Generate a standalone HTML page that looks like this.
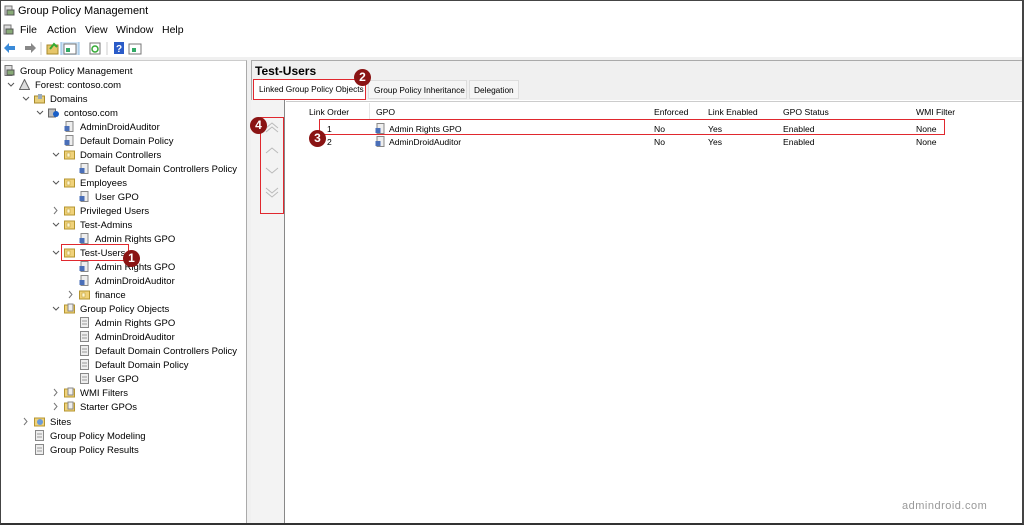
<!DOCTYPE html>
<html><head><style>
*{margin:0;padding:0;box-sizing:border-box}
body{width:1024px;height:525px;overflow:hidden;background:#fff;font-family:"Liberation Sans",sans-serif;font-size:11px;color:#000;position:relative}
.frame{position:absolute;left:0;top:0;width:1024px;height:525px;border:1px solid #444;border-bottom:2px solid #333;border-right:2px solid #444}
.a{position:absolute;white-space:nowrap}
.ic{position:absolute;width:11px;height:11px}
.red{position:absolute;border:1.5px solid #e0282e}
.badge{position:absolute;width:17px;height:17px;border-radius:50%;background:#8a1414;color:#fff;font-weight:bold;font-size:12px;text-align:center;line-height:17px}
.s{font-size:8.6px}
</style></head><body>
<svg class="ic" style="left:4px;top:5px" viewBox="0 0 11 11"><rect x="1" y="1" width="7" height="9" fill="#ddd" stroke="#777"/><rect x="3" y="5" width="7" height="5" fill="#8a7" stroke="#555"/></svg>
<div class="a" style="left:18px;top:5px;font-size:11px">Group Policy Management</div>
<svg class="ic" style="left:3px;top:24px" viewBox="0 0 11 11"><rect x="1" y="1" width="7" height="9" fill="#ddd" stroke="#777"/><rect x="3" y="5" width="7" height="5" fill="#8a7" stroke="#555"/></svg>
<div class="a" style="left:20px;top:24px;font-size:10.5px">File</div>
<div class="a" style="left:47px;top:24px;font-size:10.5px">Action</div>
<div class="a" style="left:85px;top:24px;font-size:10.5px">View</div>
<div class="a" style="left:116px;top:24px;font-size:10.5px">Window</div>
<div class="a" style="left:162px;top:24px;font-size:10.5px">Help</div>
<svg class="a" style="left:3px;top:42px" width="140" height="13" viewBox="0 0 140 13">
<path d="M1 6 L6 1 V4 H12 V8 H6 V11Z" fill="#3a8ad8"/>
<path d="M33 6 L28 1 V4 H22 V8 H28 V11Z" fill="#888"/>
<line x1="38" y1="0" x2="38" y2="13" stroke="#ccc"/>
<rect x="44" y="3" width="11" height="9" fill="#e6c66a" stroke="#a8892a"/><path d="M47 7 L51 2 L54 5" stroke="#3a3" fill="none" stroke-width="2"/>
<rect x="58" y="-2" width="18" height="16" fill="#cfe3f5" stroke="#8bb8e0"/><rect x="61" y="2" width="12" height="10" fill="#fff" stroke="#777"/><rect x="63" y="6" width="4" height="4" fill="#3a6"/>
<rect x="87" y="1" width="10" height="11" fill="#fff" stroke="#777"/><circle cx="92" cy="7" r="3" fill="none" stroke="#3a3" stroke-width="1.5"/>
<line x1="104" y1="0" x2="104" y2="13" stroke="#ccc"/>
<rect x="111" y="0" width="10" height="12" fill="#2a5bc8"/><text x="113" y="10" fill="#fff" font-size="10" font-weight="bold">?</text>
<rect x="126" y="2" width="12" height="10" fill="#fff" stroke="#777"/><rect x="129" y="6" width="4" height="4" fill="#3a6"/>
</svg>
<div class="a" style="left:0;top:57px;width:1024px;height:3px;background:#f0f0f0"></div>
<div class="a" style="left:0;top:60px;width:247px;height:465px;border-right:1px solid #aaa;border-top:1px solid #ccc"></div>
<div class="a" style="left:247px;top:60px;width:4px;height:465px;background:#f0f0f0"></div>
<div id="tree"></div>
<div class="a" style="left:251px;top:60px;width:772px;height:465px;background:#f0f0f0;border-top:1px solid #aaa;border-left:1px solid #aaa"></div>
<div class="a" style="left:255px;top:64px;font-weight:bold;font-size:12px">Test-Users</div>
<div class="a" style="left:253px;top:79px;width:113px;height:22px;background:#fff;border:1px solid #ccc;border-bottom:none"></div>
<div class="a" style="left:259px;top:84px;font-size:8.3px">Linked Group Policy Objects</div>
<div class="a" style="left:368px;top:80px;width:99px;height:19px;background:#f5f5f5;border:1px solid #ddd"></div>
<div class="a" style="left:374px;top:85px;font-size:8.3px">Group Policy Inheritance</div>
<div class="a" style="left:469px;top:80px;width:50px;height:19px;background:#f5f5f5;border:1px solid #ddd"></div>
<div class="a" style="left:474px;top:85px;font-size:8.3px">Delegation</div>
<div class="a" style="left:251px;top:100px;width:772px;height:425px;background:#fff"></div>
<div class="a" style="left:251px;top:100px;width:34px;height:425px;background:#f3f3f3;border-right:1px solid #888"></div>
<svg class="a" style="left:264px;top:120px" width="16" height="90" viewBox="0 0 16 90">
<g fill="none" stroke="#bbb"><path d="M2 8 L8 3 L14 8 M2 12 L8 7 L14 12"/><path d="M2 33 L8 28 L14 33"/><path d="M2 48 L8 53 L14 48"/><path d="M2 68 L8 73 L14 68 M2 72 L8 77 L14 72"/></g></svg>
<div class="a" style="left:286px;top:101px;width:737px;height:1px;background:#ccc"></div>
<div class="a s" style="left:309px;top:107px">Link Order</div>
<div class="a" style="left:369px;top:103px;width:1px;height:16px;background:#e5e5e5"></div>
<div class="a s" style="left:376px;top:107px">GPO</div>
<div class="a s" style="left:654px;top:107px">Enforced</div>
<div class="a s" style="left:708px;top:107px">Link Enabled</div>
<div class="a s" style="left:783px;top:107px">GPO Status</div>
<div class="a s" style="left:916px;top:107px">WMI Filter</div>
<div class="a s" style="left:327px;top:124px">1</div>
<div class="a s" style="left:327px;top:137px">2</div>
<svg class="ic" style="left:375px;top:123px" viewBox="0 0 11 11"><rect x="2" y="0.5" width="7" height="10" fill="#eee" stroke="#888"/><rect x="0.5" y="5" width="5" height="5" fill="#4a6fb8"/></svg>
<svg class="ic" style="left:375px;top:136px" viewBox="0 0 11 11"><rect x="2" y="0.5" width="7" height="10" fill="#eee" stroke="#888"/><rect x="0.5" y="5" width="5" height="5" fill="#4a6fb8"/></svg>
<div class="a s" style="left:389px;top:124px">Admin Rights GPO</div>
<div class="a s" style="left:389px;top:137px">AdminDroidAuditor</div>
<div class="a s" style="left:654px;top:124px">No</div><div class="a s" style="left:654px;top:137px">No</div>
<div class="a s" style="left:708px;top:124px">Yes</div><div class="a s" style="left:708px;top:137px">Yes</div>
<div class="a s" style="left:783px;top:124px">Enabled</div><div class="a s" style="left:783px;top:137px">Enabled</div>
<div class="a s" style="left:916px;top:124px">None</div><div class="a s" style="left:916px;top:137px">None</div>
<div class="red" style="left:253px;top:79px;width:113px;height:21px"></div>
<div class="red" style="left:319px;top:119px;width:626px;height:16px"></div>
<div class="red" style="left:260px;top:117px;width:24px;height:97px"></div>
<div class="red" style="left:61px;top:244px;width:68px;height:17px"></div>
<div class="badge" style="left:354px;top:69px">2</div>
<div class="badge" style="left:309px;top:130px">3</div>
<div class="badge" style="left:250px;top:117px">4</div>
<div class="badge" style="left:123px;top:250px">1</div>
<div class="a" style="left:902px;top:500px;font-size:11px;color:#999;letter-spacing:0.5px">admindroid.com</div>
<div class="frame"></div>
<script>
var rows=[
[0,'Group Policy Management','gpm',''],
[1,'Forest: contoso.com','forest','v'],
[2,'Domains','doms','v'],
[3,'contoso.com','dom','v'],
[4,'AdminDroidAuditor','gpo',''],
[4,'Default Domain Policy','gpo',''],
[4,'Domain Controllers','ou','v'],
[5,'Default Domain Controllers Policy','gpo',''],
[4,'Employees','ou','v'],
[5,'User GPO','gpo',''],
[4,'Privileged Users','ou','>'],
[4,'Test-Admins','ou','v'],
[5,'Admin Rights GPO','gpo',''],
[4,'Test-Users','ou','v'],
[5,'Admin Rights GPO','gpo',''],
[5,'AdminDroidAuditor','gpo',''],
[5,'finance','ou','>'],
[4,'Group Policy Objects','gpos','v'],
[5,'Admin Rights GPO','doc',''],
[5,'AdminDroidAuditor','doc',''],
[5,'Default Domain Controllers Policy','doc',''],
[5,'Default Domain Policy','doc',''],
[5,'User GPO','doc',''],
[4,'WMI Filters','gpos','>'],
[4,'Starter GPOs','gpos','>'],
[2,'Sites','sites','>'],
[2,'Group Policy Modeling','doc',''],
[2,'Group Policy Results','doc','']];
var tx=[20,35,50,64,80,95];
var icons={
gpm:'<rect x="1" y="0.5" width="7" height="10" fill="#ddd" stroke="#777"/><rect x="3" y="5" width="7" height="5" fill="#8a7" stroke="#555"/>',
forest:'<path d="M5.5 0.5 L10.5 10.5 H0.5Z" fill="#ddd" stroke="#666"/>',
doms:'<rect x="0.5" y="3" width="10" height="7" fill="#e8cf7a" stroke="#a88a2a"/><rect x="4" y="1" width="4" height="5" fill="#9ab"/>',
dom:'<rect x="0.5" y="2" width="7" height="8" fill="#bbb" stroke="#666"/><circle cx="8" cy="7" r="3" fill="#1a5fc8"/>',
gpo:'<rect x="2" y="0.5" width="7" height="10" fill="#eee" stroke="#888"/><rect x="0.5" y="5" width="5" height="5" fill="#4a6fb8"/>',
ou:'<rect x="0.5" y="2" width="10" height="8" fill="#f0d27a" stroke="#b59530"/><rect x="3" y="4" width="3" height="4" fill="#fff7d0" stroke="#b59530" stroke-width=".5"/>',
gpos:'<rect x="0.5" y="2" width="10" height="8" fill="#f0d27a" stroke="#b59530"/><rect x="4" y="1" width="5" height="7" fill="#eee" stroke="#888"/>',
doc:'<rect x="1.5" y="0.5" width="8" height="10" fill="#eee" stroke="#888"/><line x1="3" y1="4" x2="8" y2="4" stroke="#999"/><line x1="3" y1="7" x2="8" y2="7" stroke="#999"/>',
sites:'<rect x="0.5" y="2" width="10" height="8" fill="#f0d27a" stroke="#b59530"/><circle cx="6" cy="6" r="3" fill="#6a9ad8"/>'};
var h='';
rows.forEach(function(r,i){
 var y=64+i*14+(i>=25?1:0);
 var x=tx[r[0]];
 h+='<svg class="ic" style="left:'+(x-16)+'px;top:'+(y+1)+'px" viewBox="0 0 11 11">'+icons[r[2]]+'</svg>';
 if(r[3]=='v')h+='<svg class="a" style="left:'+(x-28)+'px;top:'+(y+4)+'px" width="8" height="6"><path d="M1 1 L4 4 L7 1" fill="none" stroke="#555"/></svg>';
 if(r[3]=='>')h+='<svg class="a" style="left:'+(x-27)+'px;top:'+(y+2)+'px" width="6" height="9"><path d="M1 1 L4 4.5 L1 8" fill="none" stroke="#777"/></svg>';
 h+='<div class="a" style="left:'+x+'px;top:'+(y+1.5)+'px;font-size:9.5px">'+r[1]+'</div>';
});
document.getElementById('tree').innerHTML=h;
</script>
</body></html>
